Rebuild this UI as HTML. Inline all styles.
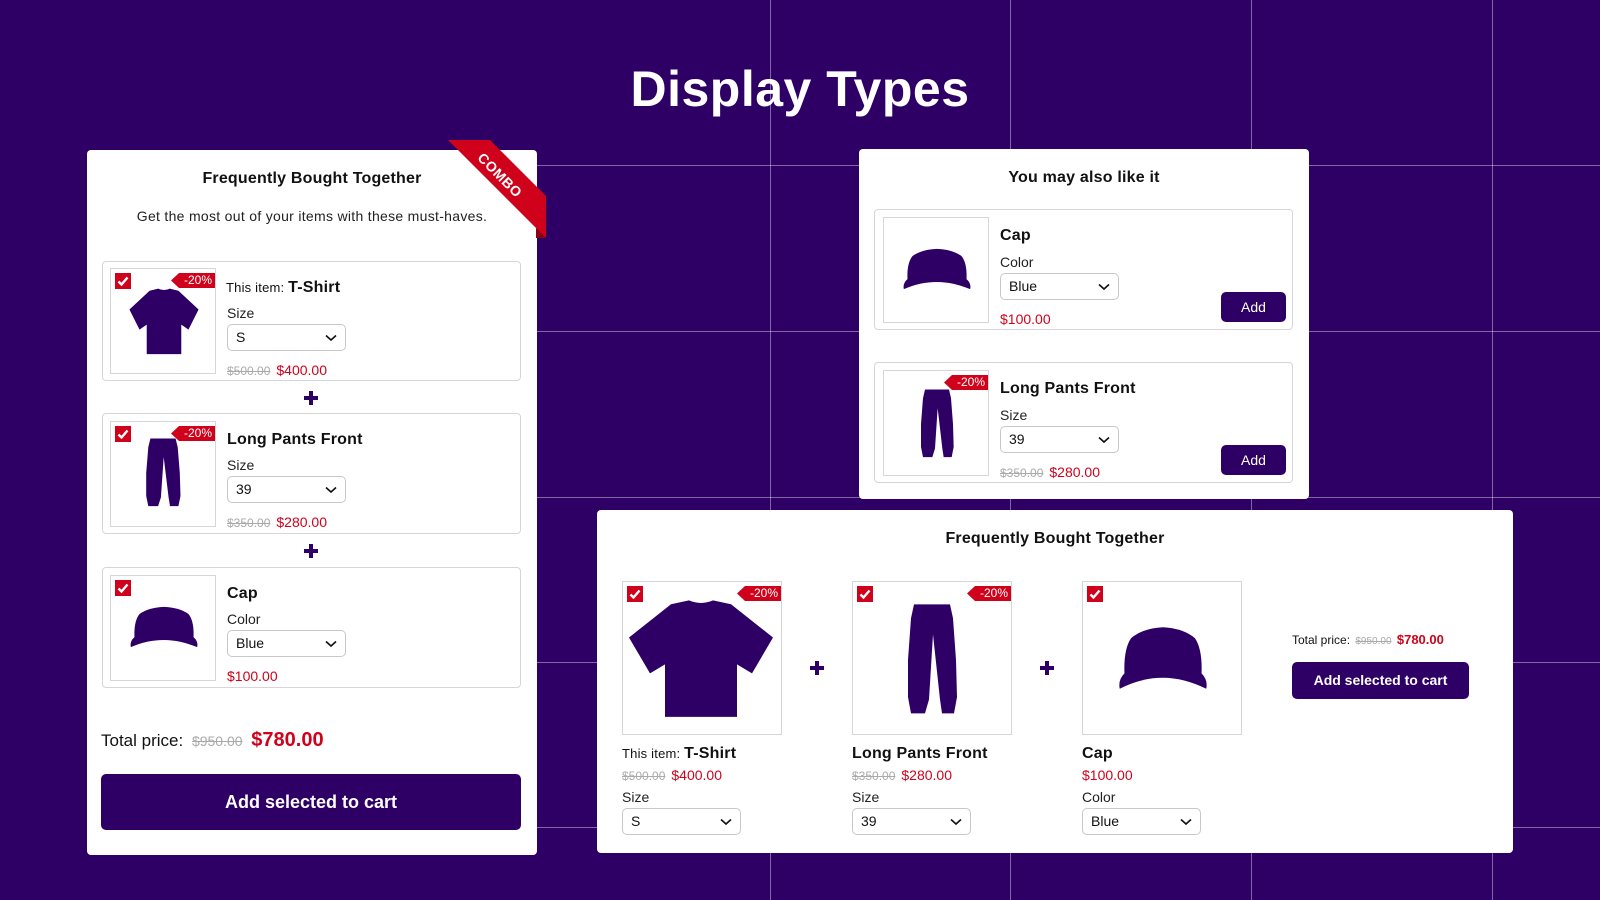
<!DOCTYPE html>
<html><head><meta charset="utf-8">
<style>
*{margin:0;padding:0;box-sizing:border-box}
body{width:1600px;height:900px;background:#2e0066;position:relative;overflow:hidden;font-family:"Liberation Sans",Arial,sans-serif;color:#111}
.a{position:absolute}
.vl{position:absolute;width:1px;background:rgba(255,255,255,.4)}
.hl{position:absolute;height:1px;background:rgba(255,255,255,.4)}
.card{position:absolute;background:#fff;border-radius:4px}
.box{position:absolute;border:1px solid #d6d6d6;border-radius:4px}
.img{position:absolute;border:1px solid #d6d6d6;background:#fff}
.cb{position:absolute;width:16px;height:16px;background:#d0021b;left:4px;top:4px}
.tag{position:absolute;right:0;top:4px;height:15px;width:44px;background:#d0021b;color:#fff;font-size:12px;line-height:15px;text-align:right;padding-right:3px;clip-path:polygon(8px 0,100% 0,100% 100%,8px 100%,0 50%)}
.sel{position:absolute;width:119px;height:27px;border:1px solid #c8c8c8;border-radius:5px;font-size:14px;line-height:25px;padding-left:8px;color:#111}
.sel svg{position:absolute;right:8px;top:9px}
.nm{position:absolute;font-size:16px;font-weight:bold;white-space:nowrap;line-height:20px;letter-spacing:.2px}
.nm small{font-size:13px;font-weight:normal}
.lb{position:absolute;font-size:14px;line-height:18px;color:#222}
.pr{position:absolute;font-size:14px;line-height:18px;color:#d0021b;white-space:nowrap}
.pr s{color:#aaa;font-size:12px;margin-right:6px}
.plus{position:absolute;width:14px;height:14px}
.btn{position:absolute;background:#2e0066;color:#fff;border-radius:5px;text-align:center;font-weight:bold}
.ttl{position:absolute;font-weight:bold;font-size:16px;text-align:center;color:#111;letter-spacing:.2px}
</style></head><body>

<div class="vl" style="left:770px;top:0;height:900px"></div>
<div class="vl" style="left:1010px;top:0;height:900px"></div>
<div class="vl" style="left:1251px;top:0;height:900px"></div>
<div class="vl" style="left:1492px;top:0;height:900px"></div>
<div class="hl" style="left:537px;top:165px;width:1063px"></div>
<div class="hl" style="left:537px;top:331px;width:1063px"></div>
<div class="hl" style="left:537px;top:497px;width:1063px"></div>
<div class="hl" style="left:537px;top:662px;width:1063px"></div>
<div class="hl" style="left:537px;top:827px;width:1063px"></div>

<div class="a" style="left:0;width:1600px;top:58px;text-align:center;color:#fff;font-size:50px;font-weight:bold;line-height:62px;letter-spacing:.5px">Display Types</div>

<svg width="0" height="0" style="position:absolute">
<defs>
<symbol id="shirt" viewBox="0 0 100 100"><path d="M30 8 L42 5 Q50 9 58 5 L70 8 L98 34 L84 62 L74 55 L74 96 L26 96 L26 55 L16 62 L2 34 Z" fill="#2e0066"/></symbol>
<symbol id="pants" viewBox="0 0 60 100"><path d="M12 2 L48 2 L51 14 L54 50 L55 82 L52 96 L40 96 L38 84 L31 28 L27 84 L23 96 L9 96 L6 82 L6 50 L9 14 Z" fill="#2e0066"/></symbol>
<symbol id="cap" viewBox="0 0 100 60"><path d="M50 2 Q72 3 84 12 Q92 22 91 44 Q98 50 96 58 Q72 48 50 48 Q26 48 4 58 Q2 50 9 44 Q8 22 16 12 Q28 3 50 2 Z" fill="#2e0066"/></symbol>
<symbol id="chk" viewBox="0 0 16 16"><path d="M3.5 8.5 L6.5 11.5 L12.5 4.5" stroke="#fff" stroke-width="2.4" fill="none"/></symbol>
<symbol id="chev" viewBox="0 0 12 8"><path d="M1 1.5 L6 6 L11 1.5" stroke="#111" stroke-width="1.6" fill="none"/></symbol>
<symbol id="pl" viewBox="0 0 14 14"><path d="M5 0H9V5H14V9H9V14H5V9H0V5H5Z" fill="#2e0066"/></symbol>
</defs></svg>

<!-- LEFT CARD -->
<div class="card" style="left:87px;top:150px;width:450px;height:705px"></div>
<div class="a" style="left:448px;top:140px;width:98px;height:98px;background:#d0021b;clip-path:polygon(0 0,42px 0,98px 56px,98px 98px)"></div>
<div class="a" style="left:536px;top:228px;width:10px;height:10px;background:#8a0012;clip-path:polygon(0 0,100% 100%,0 100%)"></div>
<div class="a" style="left:468px;top:167px;width:64px;text-align:center;color:#fff;font-weight:bold;font-size:14px;transform:rotate(45deg);letter-spacing:.5px">COMBO</div>
<div class="ttl" style="left:87px;width:450px;top:170px">Frequently Bought Together</div>
<div class="a" style="left:87px;width:450px;top:208px;text-align:center;font-size:14px;color:#222;letter-spacing:.3px">Get the most out of your items with these must-haves.</div>

<div class="box" style="left:102px;top:261px;width:419px;height:120px">
 <div class="img" style="left:7px;top:6px;width:106px;height:106px"><svg class="a" style="left:11px;top:16px" width="84" height="72"><use href="#shirt"/></svg><div class="cb"><svg width="16" height="16"><use href="#chk"/></svg></div><div class="tag">-20%</div></div>
 <div class="nm" style="left:123px;top:16px"><small>This item: </small>T-Shirt</div>
 <div class="lb" style="left:124px;top:42px">Size</div>
 <div class="sel" style="left:124px;top:62px">S<svg width="12" height="8"><use href="#chev"/></svg></div>
 <div class="pr" style="left:124px;top:99px"><s>$500.00</s>$400.00</div>
</div>
<svg class="plus" style="left:304px;top:391px"><use href="#pl"/></svg>
<div class="box" style="left:102px;top:413px;width:419px;height:121px">
 <div class="img" style="left:7px;top:7px;width:106px;height:106px"><svg class="a" style="left:31px;top:15px" width="42" height="72" viewBox="0 0 60 100" preserveAspectRatio="none"><use href="#pants"/></svg><div class="cb"><svg width="16" height="16"><use href="#chk"/></svg></div><div class="tag">-20%</div></div>
 <div class="nm" style="left:124px;top:16px">Long Pants Front</div>
 <div class="lb" style="left:124px;top:42px">Size</div>
 <div class="sel" style="left:124px;top:62px">39<svg width="12" height="8"><use href="#chev"/></svg></div>
 <div class="pr" style="left:124px;top:99px"><s>$350.00</s>$280.00</div>
</div>
<svg class="plus" style="left:304px;top:544px"><use href="#pl"/></svg>
<div class="box" style="left:102px;top:567px;width:419px;height:121px">
 <div class="img" style="left:7px;top:7px;width:106px;height:106px"><svg class="a" style="left:17px;top:26px" width="72" height="50"><use href="#cap"/></svg><div class="cb"><svg width="16" height="16"><use href="#chk"/></svg></div></div>
 <div class="nm" style="left:124px;top:16px">Cap</div>
 <div class="lb" style="left:124px;top:42px">Color</div>
 <div class="sel" style="left:124px;top:62px">Blue<svg width="12" height="8"><use href="#chev"/></svg></div>
 <div class="pr" style="left:124px;top:99px">$100.00</div>
</div>
<div class="a" style="left:101px;top:729px;font-size:17px;white-space:nowrap;color:#111">Total price: <s style="color:#aaa;font-size:14px;margin:0 4px">$950.00</s> <b style="color:#d0021b;font-size:20px">$780.00</b></div>
<div class="btn" style="left:101px;top:774px;width:420px;height:56px;line-height:56px;font-size:18px">Add selected to cart</div>

<!-- RIGHT TOP CARD -->
<div class="card" style="left:859px;top:149px;width:450px;height:350px"></div>
<div class="ttl" style="left:859px;width:450px;top:169px">You may also like it</div>
<div class="box" style="left:874px;top:209px;width:419px;height:121px">
 <div class="img" style="left:8px;top:7px;width:106px;height:106px"><svg class="a" style="left:17px;top:26px" width="72" height="50"><use href="#cap"/></svg></div>
 <div class="nm" style="left:125px;top:16px">Cap</div>
 <div class="lb" style="left:125px;top:43px">Color</div>
 <div class="sel" style="left:125px;top:63px">Blue<svg width="12" height="8"><use href="#chev"/></svg></div>
 <div class="pr" style="left:125px;top:100px">$100.00</div>
 <div class="btn" style="left:346px;top:82px;width:65px;height:30px;line-height:30px;font-size:14px;font-weight:normal">Add</div>
</div>
<div class="box" style="left:874px;top:362px;width:419px;height:121px">
 <div class="img" style="left:8px;top:7px;width:106px;height:106px"><svg class="a" style="left:33px;top:17px" width="40" height="72" viewBox="0 0 60 100" preserveAspectRatio="none"><use href="#pants"/></svg><div class="tag">-20%</div></div>
 <div class="nm" style="left:125px;top:16px">Long Pants Front</div>
 <div class="lb" style="left:125px;top:43px">Size</div>
 <div class="sel" style="left:125px;top:63px">39<svg width="12" height="8"><use href="#chev"/></svg></div>
 <div class="pr" style="left:125px;top:100px"><s>$350.00</s>$280.00</div>
 <div class="btn" style="left:346px;top:82px;width:65px;height:30px;line-height:30px;font-size:14px;font-weight:normal">Add</div>
</div>

<!-- BOTTOM CARD -->
<div class="card" style="left:597px;top:510px;width:916px;height:343px"></div>
<div class="ttl" style="left:597px;width:916px;top:530px">Frequently Bought Together</div>

<div class="img" style="left:622px;top:581px;width:160px;height:154px"><svg class="a" style="left:3px;top:12px" width="150" height="128" viewBox="0 0 100 100" preserveAspectRatio="none"><use href="#shirt"/></svg><div class="cb"><svg width="16" height="16"><use href="#chk"/></svg></div><div class="tag">-20%</div></div>
<div class="nm" style="left:622px;top:744px"><small>This item: </small>T-Shirt</div>
<div class="pr" style="left:622px;top:766px"><s>$500.00</s>$400.00</div>
<div class="lb" style="left:622px;top:788px">Size</div>
<div class="sel" style="left:622px;top:808px">S<svg width="12" height="8"><use href="#chev"/></svg></div>

<svg class="plus" style="left:810px;top:661px"><use href="#pl"/></svg>

<div class="img" style="left:852px;top:581px;width:160px;height:154px"><svg class="a" style="left:49px;top:20px" width="60" height="116" viewBox="0 0 60 100" preserveAspectRatio="none"><use href="#pants"/></svg><div class="cb"><svg width="16" height="16"><use href="#chk"/></svg></div><div class="tag">-20%</div></div>
<div class="nm" style="left:852px;top:744px">Long Pants Front</div>
<div class="pr" style="left:852px;top:766px"><s>$350.00</s>$280.00</div>
<div class="lb" style="left:852px;top:788px">Size</div>
<div class="sel" style="left:852px;top:808px">39<svg width="12" height="8"><use href="#chev"/></svg></div>

<svg class="plus" style="left:1040px;top:661px"><use href="#pl"/></svg>

<div class="img" style="left:1082px;top:581px;width:160px;height:154px"><svg class="a" style="left:33px;top:43px" width="94" height="66" viewBox="0 0 100 60" preserveAspectRatio="none"><use href="#cap"/></svg><div class="cb"><svg width="16" height="16"><use href="#chk"/></svg></div></div>
<div class="nm" style="left:1082px;top:744px">Cap</div>
<div class="pr" style="left:1082px;top:766px">$100.00</div>
<div class="lb" style="left:1082px;top:788px">Color</div>
<div class="sel" style="left:1082px;top:808px">Blue<svg width="12" height="8"><use href="#chev"/></svg></div>

<div class="a" style="left:1292px;top:632px;font-size:12px;white-space:nowrap;color:#111">Total price: <s style="color:#aaa;font-size:10px;margin:0 2px">$950.00</s> <b style="color:#d0021b;font-size:13px">$780.00</b></div>
<div class="btn" style="left:1292px;top:662px;width:177px;height:37px;line-height:37px;font-size:14px">Add selected to cart</div>

</body></html>
